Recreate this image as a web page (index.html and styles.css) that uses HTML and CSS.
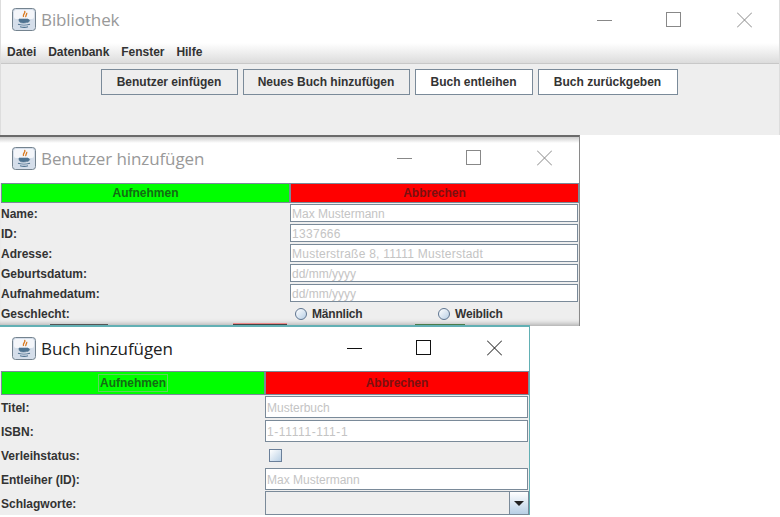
FILE: index.html
```html
<!DOCTYPE html>
<html lang="de">
<head>
	<meta charset="UTF-8">
	<title>Bibliothek</title>
	<link rel="stylesheet" href="styles.css">
</head>
<body>
<svg class="defs" width="0" height="0">
	<symbol id="java" viewBox="0 0 24 23">
		<rect x="0.5" y="0.5" width="23" height="22" rx="3" fill="#d5deea" stroke="#74838f"/>
		<rect x="2" y="2" width="20" height="9" rx="2" fill="#f4f6fa"/>
		<path d="M12.500 3c2 2-2.500 3-1 6M14.500 5c1 1.500-1.500 2.500-.5 4" fill="none" stroke="#d9791f" stroke-width="1.400"/>
		<path d="M7 11h9v1.500c0 1.500-1.500 2.500-4.500 2.500S7 14 7 12.500z M16 11.500c2.500 0 2 2.500-1 3" fill="#4f7391" stroke="#4f7391" stroke-width="0.600"/>
		<path d="M6 16.300c3 1 9 1 12 0M8 18.800c2.500.7 6 .7 8 0" fill="none" stroke="#4f7391" stroke-width="1.100"/>
	</symbol>
	<symbol id="min" viewBox="0 0 15 16"><path d="M0 8.500h15" fill="none" stroke="currentColor"/></symbol>
	<symbol id="max" viewBox="0 0 15 16"><rect x="0.500" y="0.500" width="14" height="14" fill="none" stroke="currentColor"/></symbol>
	<symbol id="close" viewBox="0 0 15 16"><path d="M0 0.500l15 15M15 0.500l-15 15" fill="none" stroke="currentColor"/></symbol>
</svg>

<div class="window main-window">
	<div class="titlebar tall">
		<svg class="app-icon"><use href="#java"/></svg>
		<span class="title">Bibliothek</span>
		<div class="controls">
			<svg class="ctl"><use href="#min"/></svg>
			<svg class="ctl"><use href="#max"/></svg>
			<svg class="ctl"><use href="#close"/></svg>
		</div>
	</div>
	<div class="menubar">
		<span>Datei</span>
		<span>Datenbank</span>
		<span>Fenster</span>
		<span>Hilfe</span>
	</div>
	<div class="toolbar">
		<button class="tool w-137">Benutzer einfügen</button>
		<button class="tool w-167">Neues Buch hinzufügen</button>
		<button class="tool w-118">Buch entleihen</button>
		<button class="tool w-140">Buch zurückgeben</button>
	</div>
</div>

<div class="window user-window">
	<div class="titlebar">
		<svg class="app-icon"><use href="#java"/></svg>
		<span class="title">Benutzer hinzufügen</span>
		<div class="controls">
			<svg class="ctl"><use href="#min"/></svg>
			<svg class="ctl"><use href="#max"/></svg>
			<svg class="ctl"><use href="#close"/></svg>
		</div>
	</div>
	<div class="form user-form">
		<button class="action ok">Aufnehmen</button>
		<button class="action cancel">Abbrechen</button>
		<label>Name:</label><div class="field">Max Mustermann</div>
		<label>ID:</label><div class="field digits">1337666</div>
		<label>Adresse:</label><div class="field address">Musterstraße 8, 11111 Musterstadt</div>
		<label>Geburtsdatum:</label><div class="field">dd/mm/yyyy</div>
		<label>Aufnahmedatum:</label><div class="field">dd/mm/yyyy</div>
		<label>Geschlecht:</label>
		<div class="radios">
			<span class="radio-item"><i class="radio"></i>Männlich</span>
			<span class="radio-item"><i class="radio"></i>Weiblich</span>
		</div>
	</div>
	<!-- buttons of the window behind, just visible under this one -->
	<i class="peek peek-a"></i>
	<i class="peek peek-b"></i>
	<i class="peek peek-c"></i>
</div>

<div class="window book-window">
	<div class="titlebar">
		<svg class="app-icon"><use href="#java"/></svg>
		<span class="title">Buch hinzufügen</span>
		<div class="controls">
			<svg class="ctl"><use href="#min"/></svg>
			<svg class="ctl"><use href="#max"/></svg>
			<svg class="ctl"><use href="#close"/></svg>
		</div>
	</div>
	<div class="form book-form">
		<button class="action ok"><span class="focus">Aufnehmen</span></button>
		<button class="action cancel">Abbrechen</button>
		<label>Titel:</label><div class="field">Musterbuch</div>
		<label>ISBN:</label><div class="field isbn">1-11111-111-1</div>
		<label>Verleihstatus:</label><div class="check-cell"><i class="check"></i></div>
		<label>Entleiher (ID):</label><div class="field">Max Mustermann</div>
		<label>Schlagworte:</label>
		<div class="combo">
			<div class="combo-text"></div>
			<div class="combo-arrow"><i></i></div>
		</div>
	</div>
</div>
</body>
</html>
```

FILE: styles.css
```css
*{
    margin: 0;
    padding: 0;
    box-sizing: border-box;
}

html, body{
    width: 780px;
    height: 517px;
    overflow: hidden;
    background: #fff;
}

body{
    position: relative;
    font-family: "Liberation Sans", Arial, sans-serif;
    font-size: 12px;
    font-weight: bold;
    color: #333;
}

.defs{
    position: absolute;
}

/* the three windows overlap like on a desktop */
.window{
    position: absolute;
    left: 0;
    background: #eee;
    overflow: hidden;
}

.main-window{
    top: 0;
    width: 780px;
    height: 135px;
    border-left: 1px solid #ddd;
    border-right: 1px solid #ddd;
}

.user-window{
    top: 135px;
    width: 580px;
    height: 191px;
    border-top: 2px solid #6a6a6a;
    border-right: 1px solid #8a8a8a;
    box-shadow: inset 0 -6px 5px -4px #aaa;
}

.book-window{
    top: 325px;
    width: 530px;
    height: 190px;
    border-top: 2px solid #62b0b4;
    border-right: 1px solid #62b0b4;
}

.titlebar{
    display: flex;
    align-items: center;
    height: 46px;
    padding: 0 0 4px 12px;
    background: linear-gradient(#ccc, #fff 6px);
    color: #999;
}

.titlebar.tall{
    height: 43px;
    padding: 0 0 4px 11px;
    background: #fff;
}

.book-window .titlebar{
    height: 44px;
    padding-bottom: 2px;
    background: #fff;
    color: #222;
}

.app-icon{
    width: 24px;
    height: 23px;
    flex: none;
}

.title{
    margin-left: 5px;
    font-family: "Open Sans", sans-serif;
    font-size: 17px;
    font-weight: normal;
    letter-spacing: -0.1px;
}

.controls{
    display: flex;
    margin-left: auto;
    margin-right: 27px;
    color: #888;
}

.book-window .controls{
    color: #111;
}

.ctl{
    width: 15px;
    height: 16px;
}

.ctl + .ctl{
    margin-left: 54px;
}

.ctl + .ctl + .ctl{
    margin-left: 56px;
}

.menubar{
    display: flex;
    gap: 12px;
    align-items: center;
    height: 21px;
    padding: 0 0 3px 6px;
    background: linear-gradient(#fff, #dcdcdc);
    border-bottom: 1px solid #c8c8c8;
    letter-spacing: -0.03px;
}

.toolbar{
    display: flex;
    justify-content: center;
    gap: 5px;
    padding: 5px 0 0;
    margin-right: 2px;
}

.tool{
    height: 26px;
    font: inherit;
    color: #333;
    background: #eee;
    border: 1px solid #7a8a99;
}

.w-137{ width: 137px; }
.w-167{ width: 167px; }
.w-118{ width: 118px; background: #fff; }
.w-140{ width: 140px; background: #fff; }

.form{
    display: grid;
    padding-left: 1px;
}

.user-form{
    grid-template-columns: 289px 289px;
    grid-template-rows: repeat(7, 20px);
}

.book-form{
    grid-template-columns: 264px 264px;
    grid-template-rows: repeat(6, 24px);
}

.form label{
    display: flex;
    align-items: center;
    padding-top: 1px;
}

.action{
    font: inherit;
    border: 1px solid #7a8a99;
}

.ok{
    background: #0f0;
    color: #136b13;
}

.cancel{
    background: #f00;
    color: #7a1010;
}

.focus{
    display: inline-block;
    padding: 1px;
    line-height: 14px;
    border: 1px solid #5fd35f;
}

.field{
    display: flex;
    align-items: center;
    margin: 1px 1px 1px 0;
    padding: 1px 0 0 1px;
    background: #fff;
    border: 1px solid #7a8a99;
    font-weight: normal;
    color: #c4c4c4;
}

.digits{
    letter-spacing: 0.3px;
}

.address{
    letter-spacing: 0.24px;
}

.isbn{
    letter-spacing: 0.6px;
}

.radios{
    display: grid;
    grid-template-columns: 143px 1fr;
    padding: 1px 0 0 5px;
    align-items: center;
}

.radio-item{
    display: flex;
    align-items: center;
    gap: 5px;
    letter-spacing: -0.2px;
}

.radio{
    width: 12px;
    height: 12px;
    border: 1px solid #5f7590;
    border-radius: 50%;
    background: linear-gradient(135deg, #fff, #b8cfe5);
}

.check-cell{
    display: flex;
    align-items: center;
    padding-left: 4px;
}

.check{
    width: 13px;
    height: 13px;
    border: 1px solid #6a7f99;
    background: linear-gradient(135deg, #fff, #b8cfe5);
}

.combo{
    display: flex;
    height: 24px;
    border: 1px solid #7a8a99;
}

.combo-text{
    flex: 1;
    background: #eee;
}

.combo-arrow{
    display: flex;
    align-items: center;
    justify-content: center;
    width: 19px;
    border-left: 1px solid #7a8a99;
    background: linear-gradient(#fff, #b8cfe5);
}

.combo-arrow i{
    border-top: 5px solid #222;
    border-left: 5px solid transparent;
    border-right: 5px solid transparent;
}

.peek{
    position: absolute;
    bottom: 1px;
    height: 1px;
}

.peek-a{
    left: 50px;
    width: 58px;
    background: #555;
}

.peek-b{
    left: 233px;
    width: 54px;
    background: #444;
    box-shadow: 0 -1px 0 #e88;
}

.peek-c{
    left: 415px;
    width: 50px;
    background: #4a7a4a;
}
```
